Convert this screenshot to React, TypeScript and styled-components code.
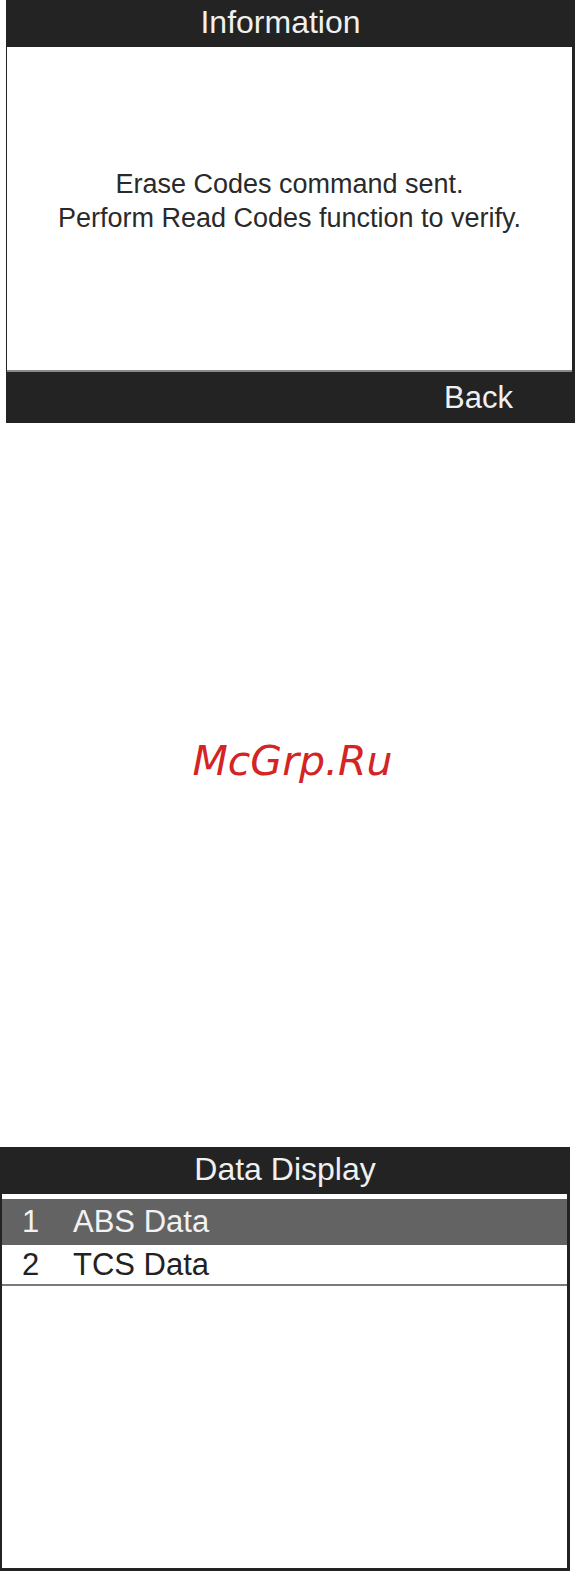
import React from "react";
import styled, { createGlobalStyle } from "styled-components";

const Global = createGlobalStyle`
  html, body { margin: 0; padding: 0; background: #ffffff; }
  body { font-family: "Liberation Sans", Arial, sans-serif; }
  #root { width: 575px; height: 1571px; overflow: hidden; }
`;

const Page = styled.div`
  width: 575px;
  height: 1571px;
  display: flex;
  flex-direction: column;
`;

const Screen = styled.section<{ $ml: number; $w: number; $h: number }>`
  margin-left: ${(p) => p.$ml}px;
  width: ${(p) => p.$w}px;
  height: ${(p) => p.$h}px;
  background: #232323;
  display: flex;
  flex-direction: column;
  box-sizing: border-box;
`;

const TitleBar = styled.header<{ $shift?: number }>`
  height: 47px;
  flex: none;
  display: flex;
  align-items: center;
  justify-content: center;
  color: #f0f0f0;
  font-size: 32px;
  padding-bottom: 2px;
  padding-right: ${(p) => p.$shift ?? 0}px;
  box-sizing: border-box;
`;

const MessagePanel = styled.div`
  flex: 1;
  margin: 0 3px 0 1px;
  background: #ffffff;
  border-bottom: 2px solid #8a8a8a;
  display: flex;
  flex-direction: column;
  align-items: center;
  justify-content: center;
  color: #2a2a2a;
  font-size: 27px;
  line-height: 34px;
  text-align: center;
  padding-bottom: 16px;
  box-sizing: border-box;
`;

const Footer = styled.footer`
  height: 51px;
  flex: none;
  display: flex;
  align-items: center;
  justify-content: flex-end;
  padding-right: 62px;
  color: #f0f0f0;
  font-size: 31px;
  box-sizing: border-box;
`;

const Middle = styled.div`
  height: 724px;
  flex: none;
  display: flex;
  justify-content: center;
  padding-top: 317px;
  padding-left: 10px;
  box-sizing: border-box;
`;

const Watermark = styled.div`
  font-family: "DejaVu Sans", Verdana, sans-serif;
  font-style: italic;
  font-size: 41px;
  line-height: 42px;
  color: #d42424;
  height: 42px;
`;

const ListPanel = styled.div`
  flex: 1;
  margin: 0 3px 3px 2px;
  background: #ffffff;
  padding-top: 5px;
  display: flex;
  flex-direction: column;
  box-sizing: border-box;
`;

const Row = styled.div<{ $selected?: boolean; $h: number }>`
  height: ${(p) => p.$h}px;
  flex: none;
  display: flex;
  align-items: center;
  background: ${(p) => (p.$selected ? "#636363" : "#ffffff")};
  color: ${(p) => (p.$selected ? "#f2f2f2" : "#222222")};
  font-size: 31px;
  border-bottom: ${(p) => (p.$selected ? "none" : "2px solid #7a7a7a")};
  box-sizing: border-box;
`;

const RowNum = styled.span`
  width: 71px;
  padding-left: 20px;
  box-sizing: border-box;
`;

export default function App() {
  return (
    <>
      <Global />
      <Page>
        <Screen $ml={6} $w={569} $h={423}>
          <TitleBar $shift={20}>Information</TitleBar>
          <MessagePanel>
            <div>Erase Codes command sent.</div>
            <div>Perform Read Codes function to verify.</div>
          </MessagePanel>
          <Footer>Back</Footer>
        </Screen>
        <Middle>
          <Watermark>McGrp.Ru</Watermark>
        </Middle>
        <Screen $ml={0} $w={570} $h={424}>
          <TitleBar>Data Display</TitleBar>
          <ListPanel>
            <Row $selected $h={46}>
              <RowNum>1</RowNum>
              <span>ABS Data</span>
            </Row>
            <Row $h={41}>
              <RowNum>2</RowNum>
              <span>TCS Data</span>
            </Row>
          </ListPanel>
        </Screen>
      </Page>
    </>
  );
}
